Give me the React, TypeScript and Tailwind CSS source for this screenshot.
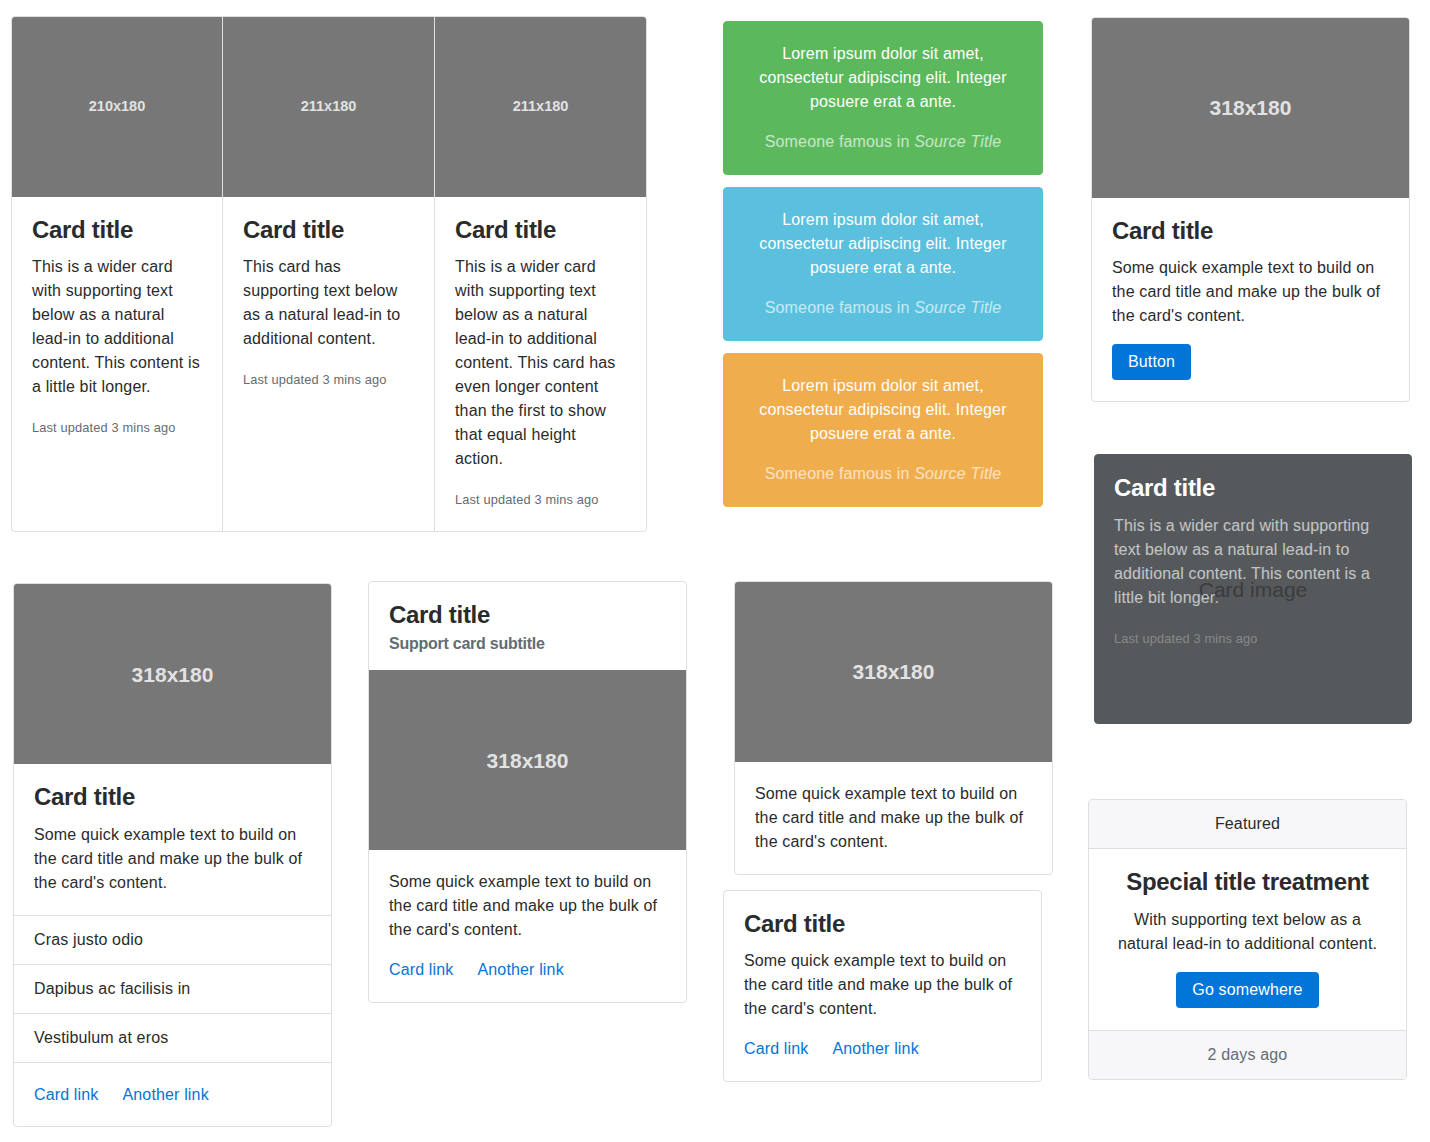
import React from "react";

const Holder: React.FC<{ label: string; className?: string }> = ({
  label,
  className = "",
}) => (
  <div
    className={`flex items-center justify-center bg-[#777777] font-bold tracking-normal text-[#e2e2e2] ${className}`}
  >
    {label}
  </div>
);

const Title: React.FC<{ children: React.ReactNode; className?: string }> = ({
  children,
  className = "",
}) => (
  <h4
    className={`mb-3 text-[24px] font-bold leading-[1.1] tracking-[-0.3px] ${className}`}
  >
    {children}
  </h4>
);

const Links: React.FC = () => (
  <div className="flex text-[#0275d8]">
    <a href="#">Card link</a>
    <a href="#" className="ml-6">
      Another link
    </a>
  </div>
);

const Updated: React.FC = () => (
  <p>
    <small className="text-[12.8px] text-[#636c72]">Last updated 3 mins ago</small>
  </p>
);

const card = "overflow-hidden rounded-[4px] border border-[#dfdfdf] bg-white";
const quickText =
  "Some quick example text to build on the card title and make up the bulk of the card's content.";

const CardGroup: React.FC = () => {
  const cells = [
    {
      img: "210x180",
      w: "w-[210px]",
      text: "This is a wider card with supporting text below as a natural lead-in to additional content. This content is a little bit longer.",
    },
    {
      img: "211x180",
      w: "w-[212px] border-l border-[#dfdfdf]",
      text: "This card has supporting text below as a natural lead-in to additional content.",
    },
    {
      img: "211x180",
      w: "w-[212px] border-l border-[#dfdfdf]",
      text: "This is a wider card with supporting text below as a natural lead-in to additional content. This card has even longer content than the first to show that equal height action.",
    },
  ];

  return (
    <div className={`flex w-[636px] ${card}`}>
      {cells.map((cell, index) => (
        <div key={index} className={`flex flex-col ${cell.w}`}>
          <Holder label={cell.img} className="h-[180px] text-[14.5px]" />
          <div className="p-5">
            <Title>Card title</Title>
            <p className="mb-4">{cell.text}</p>
            <Updated />
          </div>
        </div>
      ))}
    </div>
  );
};

const Quote: React.FC<{ bg: string }> = ({ bg }) => (
  <div className={`rounded-[4px] border p-5 text-center text-white ${bg}`}>
    <p className="mb-4">
      Lorem ipsum dolor sit amet, consectetur adipiscing elit. Integer posuere
      erat a ante.
    </p>
    <footer className="text-white/65">
      Someone famous in <cite className="italic">Source Title</cite>
    </footer>
  </div>
);

const App: React.FC = () => {
  return (
    <div className="min-h-[1142px] bg-white font-['Liberation_Sans',Arial,sans-serif] text-[16px] leading-[1.5] tracking-[0.15px] text-[#292b2c]">
      <div className="flex items-start">
        {/* left block: group + two cards */}
        <div className="ml-[11px] mt-[16px] flex w-[676px] flex-col">
          <CardGroup />
          <div className="flex items-start">
            <div className={`ml-[2px] mt-[51px] w-[319px] ${card}`}>
              <Holder label="318x180" className="h-[180px] text-[21px]" />
              <div className="p-5">
                <Title>Card title</Title>
                <p>{quickText}</p>
              </div>
              <ul>
                {["Cras justo odio", "Dapibus ac facilisis in", "Vestibulum at eros"].map(
                  (item) => (
                    <li key={item} className="border-t border-[#dfdfdf] px-5 py-3">
                      {item}
                    </li>
                  )
                )}
              </ul>
              <div className="border-t border-[#dfdfdf] px-5 pb-[19px] pt-5">
                <Links />
              </div>
            </div>

            <div className={`ml-[36px] mt-[49px] w-[319px] ${card}`}>
              <div className="p-5 pb-[18px]">
                <Title>Card title</Title>
                <h6 className="-mt-1.5 text-[16px] font-bold leading-[1.1] tracking-[-0.25px] text-[#636c72]">
                  Support card subtitle
                </h6>
              </div>
              <Holder label="318x180" className="h-[180px] text-[21px]" />
              <div className="p-5">
                <p className="mb-4">{quickText}</p>
                <Links />
              </div>
            </div>
          </div>
        </div>

        {/* third column */}
        <div className="ml-[36px] flex w-[331px] flex-col">
          <div className="mt-[21px] flex w-[320px] flex-col gap-[12px]">
            <Quote bg="border-[#5cb85c] bg-[#5cb85c]" />
            <Quote bg="border-[#5bc0de] bg-[#5bc0de]" />
            <Quote bg="border-[#f0ad4e] bg-[#f0ad4e]" />
          </div>
          <div className={`ml-[11px] mt-[74px] w-[319px] ${card}`}>
            <Holder label="318x180" className="h-[180px] text-[21px]" />
            <div className="p-5">
              <p>{quickText}</p>
            </div>
          </div>
          <div className={`mt-[15px] w-[319px] ${card}`}>
            <div className="p-5">
              <Title>Card title</Title>
              <p className="mb-4">{quickText}</p>
              <Links />
            </div>
          </div>
        </div>

        {/* fourth column */}
        <div className="ml-[34px] flex flex-col">
          <div className={`ml-[3px] mt-[17px] w-[319px] ${card}`}>
            <Holder label="318x180" className="h-[180px] text-[21px]" />
            <div className="p-5 pb-[21px]">
              <Title>Card title</Title>
              <p className="mb-4 mt-px">{quickText}</p>
              <button className="rounded-[4px] bg-[#0275d8] px-4 py-2 leading-[1.25] text-white">
                Button
              </button>
            </div>
          </div>

          <div className="relative ml-[6px] mt-[52px] h-[270px] w-[318px] overflow-hidden rounded-[4px] border border-[#55595c] bg-[#55595c] text-white">
            <div className="absolute inset-0 flex items-center justify-center text-[21px] tracking-normal text-[#3a3c3e]">
              Card image
            </div>
            <div className="relative px-5 py-5 pl-[19px]">
              <Title className="text-white">Card title</Title>
              <p className="mb-4 text-white/65">
                This is a wider card with supporting text below as a natural
                lead-in to additional content. This content is a little bit
                longer.
              </p>
              <p>
                <small className="text-[12.8px] text-white/30">
                  Last updated 3 mins ago
                </small>
              </p>
            </div>
          </div>

          <div className={`mt-[75px] w-[319px] text-center ${card}`}>
            <div className="border-b border-[#dfdfdf] bg-[#f7f7f9] px-5 py-3">
              Featured
            </div>
            <div className="p-5 pb-[22px]">
              <Title>Special title treatment</Title>
              <p className="mb-4">
                With supporting text below as a natural lead-in to additional
                content.
              </p>
              <button className="rounded-[4px] bg-[#0275d8] px-4 py-2 leading-[1.25] text-white">
                Go somewhere
              </button>
            </div>
            <div className="border-t border-[#dfdfdf] bg-[#f7f7f9] px-5 py-3 text-[#636c72]">
              2 days ago
            </div>
          </div>
        </div>
      </div>
    </div>
  );
};

export default App;
